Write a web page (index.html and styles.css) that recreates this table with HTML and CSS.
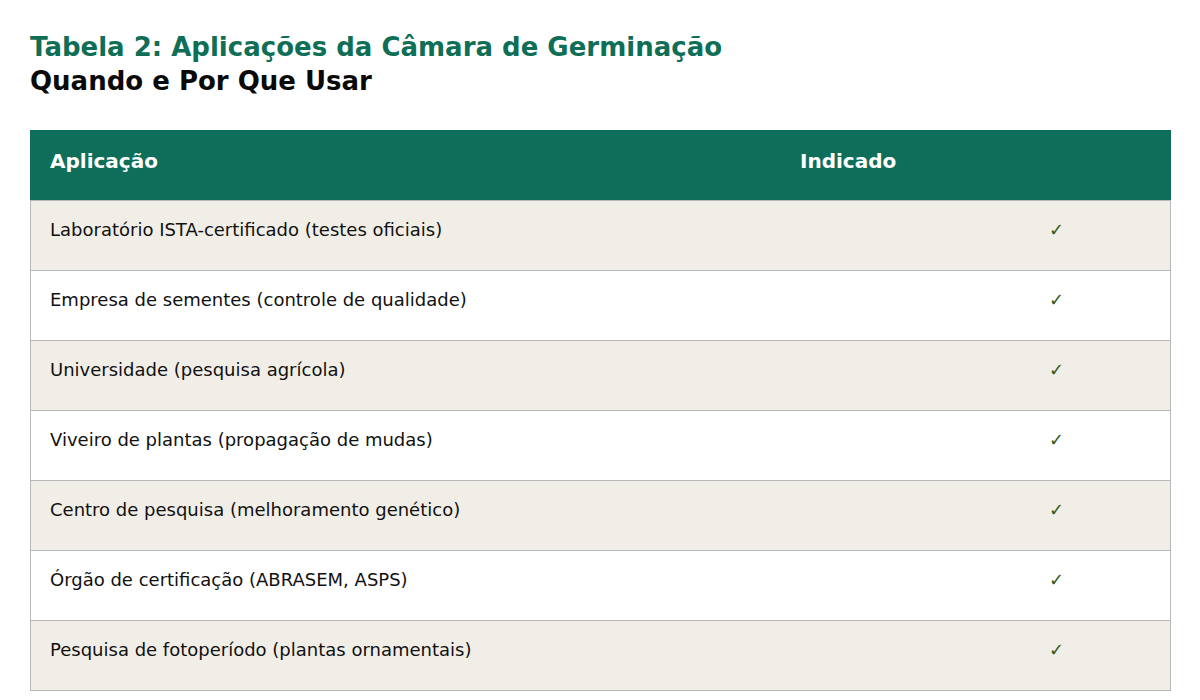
FILE: index.html
```html
<!DOCTYPE html>
<html lang="pt">
<head>
<meta charset="utf-8">
<title>Tabela 2</title>
<link rel="stylesheet" href="styles.css">
</head>
<body>
<div class="page">
  <h1 class="title">Tabela 2: Aplicações da Câmara de Germinação</h1>
  <h2 class="subtitle">Quando e Por Que Usar</h2>
  <table class="tbl">
    <thead>
      <tr><th class="c1">Aplicação</th><th class="c2">Indicado</th></tr>
    </thead>
    <tbody>
      <tr class="alt"><td class="c1">Laboratório ISTA-certificado (testes oficiais)</td><td class="c2 chk">✓</td></tr>
      <tr><td class="c1">Empresa de sementes (controle de qualidade)</td><td class="c2 chk">✓</td></tr>
      <tr class="alt"><td class="c1">Universidade (pesquisa agrícola)</td><td class="c2 chk">✓</td></tr>
      <tr><td class="c1">Viveiro de plantas (propagação de mudas)</td><td class="c2 chk">✓</td></tr>
      <tr class="alt"><td class="c1">Centro de pesquisa (melhoramento genético)</td><td class="c2 chk">✓</td></tr>
      <tr><td class="c1">Órgão de certificação (ABRASEM, ASPS)</td><td class="c2 chk">✓</td></tr>
      <tr class="alt"><td class="c1">Pesquisa de fotoperíodo (plantas ornamentais)</td><td class="c2 chk">✓</td></tr>
    </tbody>
  </table>
</div>
</body>
</html>
```

FILE: styles.css
```css
* { box-sizing: border-box; }
html, body { margin: 0; padding: 0; background: #ffffff; }
body { font-family: "DejaVu Sans", Verdana, sans-serif; color: #111; }
.page { padding: 30px 30px 0 30px; }
.title {
  margin: 0;
  font-size: 26px;
  line-height: 34px;
  font-weight: bold;
  color: #0f6e56;
}
.subtitle {
  margin: 0;
  font-size: 26px;
  line-height: 34px;
  font-weight: bold;
  color: #0a0a0a;
}
.tbl {
  margin-top: 32px;
  width: 1141px;
  border-collapse: separate;
  border-spacing: 0;
  table-layout: fixed;
}
.tbl th {
  background: #0f6e59;
  color: #ffffff;
  font-size: 20px;
  font-weight: bold;
  text-align: left;
  vertical-align: top;
  height: 70px;
  padding: 19px 20px 0 20px;
  line-height: 24px;
}
.tbl th.c1 { width: 750px; }
.tbl td {
  height: 70px;
  vertical-align: top;
  padding: 18px 20px 0 20px;
  font-size: 18px;
  line-height: 22px;
  border-bottom: 1px solid #b8b8b8;
}
.tbl tbody tr:first-child td { border-top: 1px solid #b8b8b8; height: 71px; }
.tbl td.c1 { border-left: 1px solid #b8b8b8; padding-left: 19px; }
.tbl td.c2 { border-right: 1px solid #b8b8b8; }
.tbl tr.alt td { background: #f1eee7; }
.chk {
  color: #2e5a1c;
  font-size: 17px;
  padding-left: 269px !important;
}
```
